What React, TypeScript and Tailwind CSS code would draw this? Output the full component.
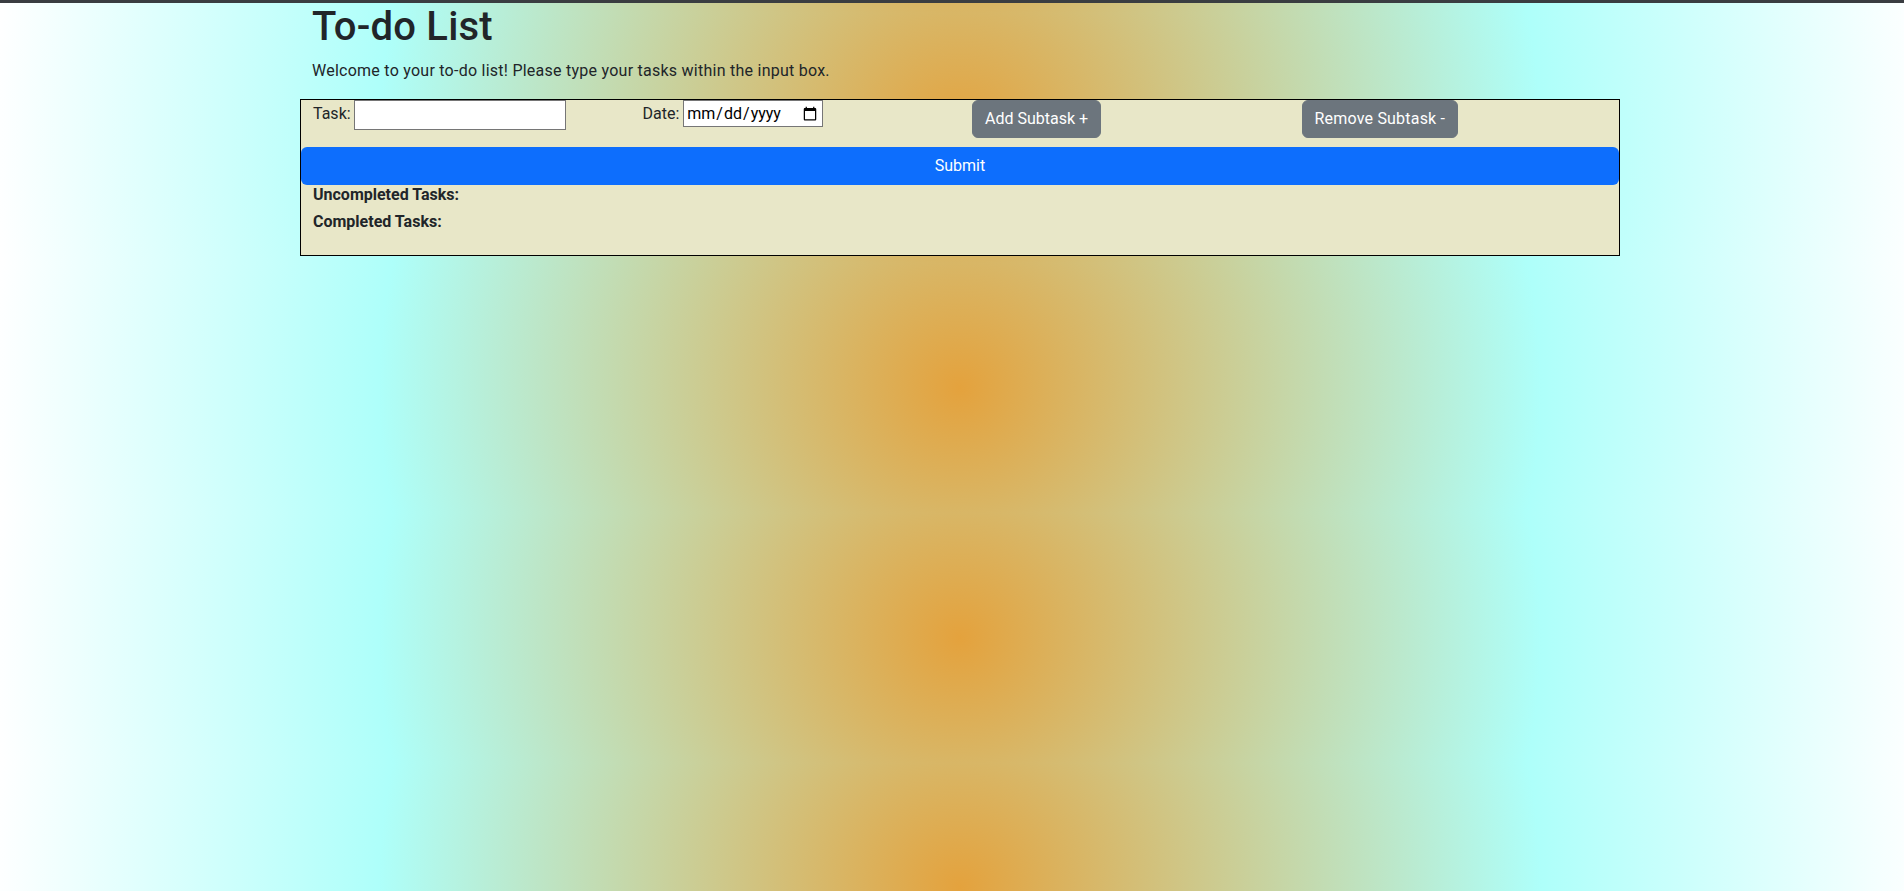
import { useState } from "react";

export default function App() {
  const [task, setTask] = useState("");
  const [date, setDate] = useState("");

  return (
    <div className="flex min-h-screen flex-col font-[Roboto,'Liberation_Sans',sans-serif] text-base text-[#212529]">
      {/* thin dark strip along the top edge */}
      <div className="h-[3px] bg-[#3a3d41]" />

      <main className="flex-1 bg-[radial-gradient(circle,#e4a23d_0%,#aefffa_60%,#ffffff_100%)] bg-[length:1920px_250px] bg-[position:0_10px] bg-repeat">
        <div className="ml-[300px] w-[1320px]">
          <div className="px-3">
            <h1 className="mb-2 text-[40px] font-medium leading-[1.2] tracking-[0.2px]">
              To-do List
            </h1>
            <p className="mb-4 leading-6 tracking-[0.25px]">
              Welcome to your to-do list! Please type your tasks within the
              input box.
            </p>
          </div>

          <div className="border border-black bg-[#e8e7c8] pb-4">
            {/* inputs + subtask buttons */}
            <div className="grid grid-cols-4">
              <div className="flex items-start gap-[3px] px-3">
                <label className="mt-[2px] leading-6">Task:</label>
                <input
                  type="text"
                  value={task}
                  onChange={(e) => setTask(e.target.value)}
                  className="h-[30px] w-[212px] border border-[#767676] bg-white px-[2px] leading-6 text-black outline-none"
                />
              </div>
              <div className="flex items-start gap-[4px] px-3">
                <label className="mt-[2px] leading-6">Date:</label>
                <input
                  type="date"
                  value={date}
                  onChange={(e) => setDate(e.target.value)}
                  className="h-[27px] w-[140px] border border-[#767676] bg-white px-[2px] leading-5 text-black outline-none"
                />
              </div>
              <div className="px-3">
                <button className="h-[38px] rounded-md border border-[#6c757d] bg-[#6c757d] px-3 leading-6 text-white">
                  Add Subtask +
                </button>
              </div>
              <div className="px-3">
                <button className="h-[38px] rounded-md border border-[#6c757d] bg-[#6c757d] px-3 leading-6 tracking-[0.2px] text-white">
                  Remove Subtask -
                </button>
              </div>
            </div>

            <button className="mt-[9px] h-[38px] w-full rounded-md bg-[#0d6efd] leading-6 text-white">
              Submit
            </button>

            <div className="px-3">
              <h6 className="mb-2 font-bold leading-[19.2px]">
                Uncompleted Tasks:
              </h6>
              <h6 className="mb-2 font-bold leading-[19.2px]">
                Completed Tasks:
              </h6>
            </div>
          </div>
        </div>
      </main>
    </div>
  );
}
